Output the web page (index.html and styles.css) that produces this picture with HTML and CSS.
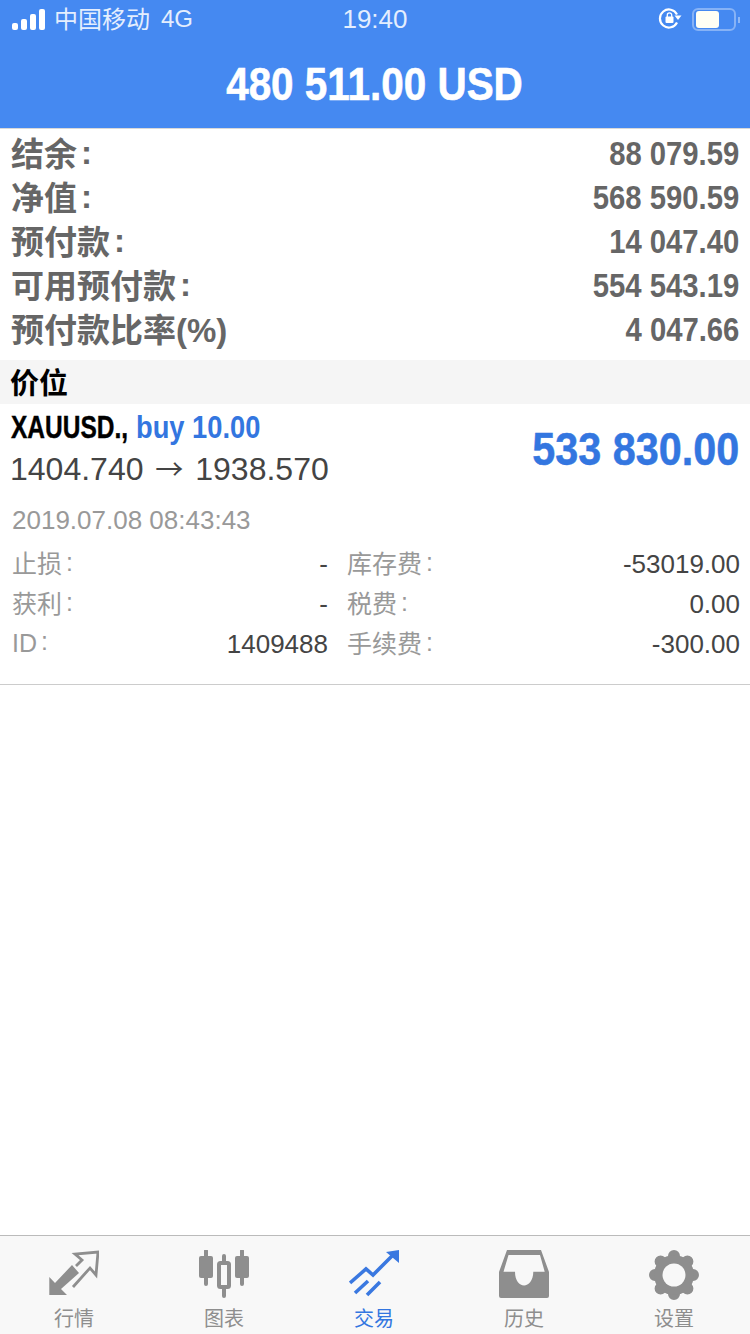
FILE: index.html
```html
<!DOCTYPE html>
<html lang="zh-CN">
<head>
    <meta charset="UTF-8">
    <meta name="viewport" content="width=device-width, initial-scale=1.0">
    <title>交易</title>
    <link rel="stylesheet" href="styles.css">
</head>
<body>
    <div class="page">
        <header class="top">
            <div class="status-bar">
                <div class="status-left">
                    <div class="signal"><i class="bar-1"></i><i class="bar-2"></i><i class="bar-3"></i><i class="bar-4"></i></div>
                    <span class="carrier">中国移动</span>
                    <span class="network">4G</span>
                </div>
                <div class="clock">19:40</div>
                <div class="status-right">
                    <svg class="lock-icon" viewBox="0 0 24 24" width="24" height="24">
                        <path d="M19 8.5A9 9 0 1 0 19 16.5" fill="none" stroke="#fff" stroke-width="2.2"/>
                        <path d="M16.5 9.5h7l-3.500 4.500z" fill="#fff"/>
                        <rect x="7.5" y="10.5" width="8" height="6.5" rx="1" fill="#fff"/>
                        <path d="M9.3 11V9a2.200 2.200 0 0 1 4.400 0v2" fill="none" stroke="#fff" stroke-width="1.3"/>
                    </svg>
                    <div class="battery"><div class="battery-level"></div></div>
                    <div class="battery-cap"></div>
                </div>
            </div>
            <div class="balance-title"><span class="narrow">480 511.00 USD</span></div>
        </header>

        <section class="account">
            <div class="account-row"><span class="account-label">结余<span class="colon">:</span></span><span class="account-value narrow-end">88 079.59</span></div>
            <div class="account-row"><span class="account-label">净值<span class="colon">:</span></span><span class="account-value narrow-end">568 590.59</span></div>
            <div class="account-row"><span class="account-label">预付款<span class="colon">:</span></span><span class="account-value narrow-end">14 047.40</span></div>
            <div class="account-row"><span class="account-label">可用预付款<span class="colon">:</span></span><span class="account-value narrow-end">554 543.19</span></div>
            <div class="account-row"><span class="account-label">预付款比率(%)</span><span class="account-value narrow-end">4 047.66</span></div>
        </section>

        <div class="section-title">价位</div>

        <main class="trade">
            <div class="trade-head">
                <div>
                    <div class="trade-name"><span class="symbol">XAUUSD.,</span><span class="side">buy 10.00</span></div>
                    <div class="trade-price">1404.740 <span class="arrow">→</span> 1938.570</div>
                </div>
                <div class="trade-profit narrow-end">533 830.00</div>
            </div>
            <div class="trade-time">2019.07.08 08:43:43</div>
            <div class="details">
                <div class="detail"><span class="detail-label">止损<span class="colon">:</span></span><span>-</span></div>
                <div class="detail"><span class="detail-label">库存费<span class="colon">:</span></span><span>-53019.00</span></div>
                <div class="detail"><span class="detail-label">获利<span class="colon">:</span></span><span>-</span></div>
                <div class="detail"><span class="detail-label">税费<span class="colon">:</span></span><span>0.00</span></div>
                <div class="detail"><span class="detail-label">ID<span class="colon">:</span></span><span>1409488</span></div>
                <div class="detail"><span class="detail-label">手续费<span class="colon">:</span></span><span>-300.00</span></div>
            </div>
        </main>

        <nav class="tabs">
            <div class="tab">
                <svg viewBox="0 0 50 50" width="50" height="50">
                    <path d="M0.3 27L6 33 23 15 30 23 12 39 18 45H0.3z" fill="#8e8e8e"/>
                    <path d="M27 16L33 10 26 4 49 2 47 25 41 18 24 37" fill="none" stroke="#8e8e8e" stroke-width="2.8"/>
                </svg>
                <span>行情</span>
            </div>
            <div class="tab">
                <svg viewBox="0 0 50 50" width="50" height="50">
                    <path d="M7 1V34M43 1V34M25 6V46" stroke="#8e8e8e" stroke-width="4" stroke-linecap="round"/>
                    <rect x="0" y="6" width="14" height="22" rx="2" fill="#8e8e8e"/>
                    <rect x="36" y="6" width="14" height="22" rx="2" fill="#8e8e8e"/>
                    <rect x="20" y="13" width="10" height="24" rx="1.5" fill="#f8f8f8" stroke="#8e8e8e" stroke-width="4"/>
                </svg>
                <span>图表</span>
            </div>
            <div class="tab tab-active">
                <svg viewBox="0 0 50 50" width="50" height="50">
                    <path d="M1 33L17 19 24 25 45 4M6 43L19 31M18 45L31 32" fill="none" stroke="#3a78e0" stroke-width="3.6"/>
                    <path d="M37 2L50 0V13z" fill="#3a78e0"/>
                </svg>
                <span>交易</span>
            </div>
            <div class="tab">
                <svg viewBox="0 0 50 50" width="50" height="50">
                    <path fill-rule="evenodd" fill="#8e8e8e" d="M8 0H42L50 22V46Q50 48 48 48H2Q0 48 0 46V22zM9.5 5L4.5 21.700H16C16 40 34 40 34.300 21.700H45.700L41 5z"/>
                </svg>
                <span>历史</span>
            </div>
            <div class="tab">
                <svg viewBox="0 0 50 50" width="50" height="50">
                    <g stroke="#8e8e8e" stroke-width="12" stroke-linecap="round">
                        <path d="M25 6V44M6 25H44M11.600 11.600L38.400 38.400M38.400 11.600L11.600 38.400"/>
                    </g>
                    <circle cx="25" cy="25" r="20" fill="#8e8e8e"/>
                    <circle cx="25" cy="25" r="11.500" fill="#f8f8f8"/>
                </svg>
                <span>设置</span>
            </div>
        </nav>
    </div>
</body>
</html>
```

FILE: styles.css
```css
body {
    font-family: "Liberation Sans", "Noto Sans CJK SC", sans-serif;
    background-color: #fff;
    margin: 0;
    padding: 0;
}

.page {
    display: flex;
    flex-direction: column;
    height: 1334px;
    overflow: hidden;
}

/* blue header */
.top {
    height: 128px;
    background-color: #4589f1;
    color: #fff;
    flex-shrink: 0;
}

.status-bar {
    display: grid;
    grid-template-columns: 1fr auto 1fr;
    align-items: center;
    height: 40px;
    color: #e4eefe;
}

.status-left {
    display: flex;
    align-items: center;
    padding-left: 12px;
    font-size: 24px;
}

.signal {
    display: flex;
    align-items: flex-end;
    gap: 3px;
    height: 21px;
    margin: 0 9px 2px 0;
}

.signal i {
    display: block;
    width: 6px;
    border-radius: 2px;
    background-color: #fff;
}

.bar-1 { height: 7px; }
.bar-2 { height: 11px; }
.bar-3 { height: 16px; }
.bar-4 { height: 21px; }

.carrier {
    padding-bottom: 5px;
}

.network {
    margin-left: 11px;
    padding-bottom: 2px;
}

.clock {
    font-size: 26px;
    padding-bottom: 2px;
}

.status-right {
    display: flex;
    align-items: center;
    justify-content: flex-end;
    padding: 0 10px 1px 0;
}

.lock-icon {
    margin: 0 10px 3px 0;
}

.battery {
    box-sizing: border-box;
    width: 44px;
    height: 23px;
    padding: 1px 2px;
    border: 2px solid rgba(255, 255, 255, 0.35);
    border-radius: 6px;
}

.battery-level {
    width: 23px;
    height: 100%;
    border-radius: 3px;
    background-color: #fffff4;
}

.battery-cap {
    width: 2px;
    height: 6px;
    margin-left: 2px;
    background-color: rgba(255, 255, 255, 0.4);
}

.balance-title {
    text-align: center;
    font-size: 47px;
    font-weight: bold;
    line-height: 88px;
    height: 88px;
    padding-right: 1px;
    -webkit-text-stroke: 0.6px #fff;
}

.narrow {
    display: inline-block;
    transform: scaleX(0.86);
    white-space: nowrap;
}

.narrow-end {
    display: inline-block;
    transform: scaleX(0.86);
    transform-origin: right center;
    white-space: nowrap;
}

.colon {
    margin-left: 4px;
    vertical-align: 2px;
}

/* account summary */
.account {
    flex-shrink: 0;
    padding: 2px 11px 9px 11px;
    border-top: 1px solid #d8d8d8;
}

.account-row {
    display: flex;
    justify-content: space-between;
    align-items: center;
    height: 44px;
    color: #666;
    font-weight: bold;
}

.account-label {
    font-size: 33px;
    padding-bottom: 2px;
}

.account-value {
    font-size: 34px;
}

.section-title {
    flex-shrink: 0;
    height: 44px;
    line-height: 48px;
    padding-left: 10px;
    background-color: #f5f5f5;
    color: #000;
    font-size: 29px;
    font-weight: bold;
}

/* position */
.trade {
    flex: 1;
    padding-top: 4px;
}

.trade-head {
    display: flex;
    justify-content: space-between;
    align-items: center;
    padding: 0 11px;
}

.trade-name {
    height: 40px;
    line-height: 40px;
    font-size: 31px;
    font-weight: bold;
    white-space: nowrap;
}

.symbol {
    display: inline-block;
    color: #000;
    transform: scaleX(0.79);
    transform-origin: left center;
    margin-right: -23px;
    -webkit-text-stroke: 0.4px #000;
}

.side {
    display: inline-block;
    color: #3376e0;
    transform: scaleX(0.88);
    transform-origin: left center;
}

.trade-price {
    height: 40px;
    line-height: 40px;
    margin-left: -1px;
    font-size: 32px;
    color: #444;
}

.arrow {
    margin: 0 3px;
    font-family: "Noto Sans CJK SC", sans-serif;
    font-size: 28px;
}

.trade-profit {
    font-size: 47px;
    font-weight: bold;
    color: #3376e0;
    transform: scaleX(0.88);
    -webkit-text-stroke: 0.5px #3376e0;
}

.trade-time {
    height: 40px;
    line-height: 40px;
    margin-top: 12px;
    padding-left: 12px;
    font-size: 26px;
    color: #999;
}

.details {
    display: grid;
    grid-template-columns: 316px 1fr;
    column-gap: 19px;
    margin-top: 4px;
    padding: 0 10px 20px 12px;
    border-bottom: 1px solid #ccc;
}

.detail {
    display: flex;
    justify-content: space-between;
    align-items: center;
    height: 40px;
    font-size: 26px;
    color: #444;
}

.detail-label {
    font-size: 25px;
    color: #999;
    padding-bottom: 4px;
}

/* bottom tabs */
.tabs {
    flex-shrink: 0;
    display: flex;
    box-sizing: border-box;
    height: 99px;
    border-top: 1px solid #bbb;
    background-color: #f8f8f8;
}

.tab {
    flex: 1;
    display: flex;
    flex-direction: column;
    align-items: center;
    padding: 14px 2px 0 0;
    font-size: 20px;
    color: #8e8e8e;
}

.tab span {
    margin-top: 6px;
    line-height: 26px;
}

.tab-active {
    color: #3376e0;
}
```
